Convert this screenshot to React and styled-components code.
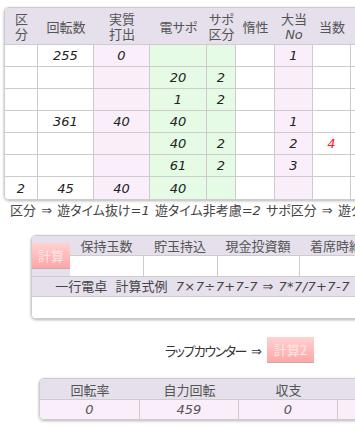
import React from "react";
import styled, { createGlobalStyle } from "styled-components";

const Global = createGlobalStyle`
  html, body { margin: 0; padding: 0; background: #fff; overflow: hidden; }
  body {
    font-family: "DejaVu Sans", "Noto Sans CJK JP", sans-serif;
    font-size: 13px;
    color: #333;
    font-feature-settings: "palt";
  }
`;

const Page = styled.div`
  width: 355px;
  height: 428px;
  overflow: hidden;
  padding-top: 7px;
  box-sizing: border-box;
`;

const C = {
  head: "#e5e0eb",
  pink: "#f9eefa",
  green: "#e5fbe5",
  line: "#cccccc",
};

const MainGrid = styled.div`
  display: grid;
  grid-template-columns: 33px 56px 56px 57px 29px 39px 38px 38px 40px;
  grid-template-rows: 37px repeat(7, 22px);
  width: max-content;
  margin-left: 4px;
  border: 1px solid ${C.line};
  border-radius: 5px;
  overflow: hidden;
  box-shadow: 0 1px 3px rgba(0, 0, 0, 0.3);
`;

const HeadCell = styled.div`
  box-sizing: border-box;
  background: ${C.head};
  border-bottom: 1px solid ${C.line};
  display: flex;
  align-items: center;
  justify-content: center;
  text-align: center;
  line-height: 15px;
  color: #555;
  font-family: "Noto Sans CJK JP", sans-serif;
  white-space: nowrap;
`;

const Ital = styled.span`
  font-family: "DejaVu Sans", sans-serif;
  font-style: italic;
`;

const DataCell = styled.div`
  box-sizing: border-box;
  background: ${(p) => p.$bg};
  border-right: 1px solid ${C.line};
  border-bottom: ${(p) => (p.$last ? "none" : `1px solid ${C.line}`)};
  display: flex;
  align-items: center;
  justify-content: center;
  font-style: italic;
  color: ${(p) => (p.$red ? "#ff2020" : "#222")};
`;

const Note = styled.div`
  margin: 3px 0 0 10px;
  line-height: 15px;
  white-space: nowrap;
  color: #444;
  word-spacing: 1px;
  i { font-family: "DejaVu Sans", sans-serif; }
`;

const Calc = styled.div`
  display: grid;
  grid-template-columns: 38px 73px 74px 82px 74px;
  grid-template-rows: 20px 21px 20px 21px;
  width: max-content;
  margin: 17px 0 0 31px;
  border: 1px solid ${C.line};
  border-radius: 5px;
  overflow: hidden;
  box-shadow: 0 1px 3px rgba(0, 0, 0, 0.3);
`;

const BtnCell = styled.div`
  grid-row: span 2;
  background: ${C.head};
  border-bottom: 1px solid ${C.line};
  display: flex;
  align-items: center;
  justify-content: center;
`;

const PinkButton = styled.button`
  width: ${(p) => p.$w}px;
  height: 26px;
  padding: 0;
  border: none;
  border-bottom: 1px solid #b9b0b0;
  background: linear-gradient(#ffd2d2, #ffa6a6);
  color: #ffe6e6;
  font-family: "Noto Sans CJK JP", sans-serif;
  font-size: 13px;
  cursor: pointer;
`;

const InputCell = styled.div`
  box-sizing: border-box;
  background: #fff;
  border-left: ${(p) => (p.$first ? "none" : `1px solid ${C.line}`)};
  border-bottom: 1px solid ${C.line};
`;

const WideHead = styled(HeadCell)`
  grid-column: 1 / -1;
  color: #444;
  font-family: "DejaVu Sans", "Noto Sans CJK JP", sans-serif;
`;

const Formula = styled.i`
  font-family: "DejaVu Sans", sans-serif;
  letter-spacing: 0.4px;
`;

const WideBlank = styled.div`
  grid-column: 1 / -1;
  background: #fff;
`;

const LapRow = styled.div`
  display: flex;
  align-items: center;
  gap: 5px;
  margin: 18px 0 0 165px;
  white-space: nowrap;
  color: #333;
`;

const LapLabel = styled.span`
  letter-spacing: -1.5px;
`;

const Arrow = styled.span`
  margin-left: 5px;
  letter-spacing: 0;
`;

const Result = styled.div`
  display: grid;
  grid-template-columns: 100px 99px 99px 100px;
  grid-template-rows: 21px 19px;
  width: max-content;
  margin: 15px 0 0 39px;
  border: 1px solid ${C.line};
  border-radius: 5px;
  overflow: hidden;
  box-shadow: 0 1px 3px rgba(0, 0, 0, 0.3);
`;

const ResultVal = styled.div`
  box-sizing: border-box;
  background: ${C.pink};
  border-right: 1px solid ${C.line};
  display: flex;
  align-items: center;
  justify-content: center;
  font-style: italic;
  color: #555;
`;

const headers = [
  ["区", "分"],
  ["回転数"],
  ["実質", "打出"],
  ["電サポ"],
  ["サポ", "区分"],
  ["惰性"],
  ["大当", <Ital key="no">No</Ital>],
  ["当数"],
  [""],
];

const colBg = ["#fff", "#fff", C.pink, C.green, C.green, "#fff", C.pink, "#fff", "#fff"];

const rows = [
  ["", "255", "0", "", "", "", "1", "", ""],
  ["", "", "", "20", "2", "", "", "", ""],
  ["", "", "", "1", "2", "", "", "", ""],
  ["", "361", "40", "40", "", "", "1", "", ""],
  ["", "", "", "40", "2", "", "2", "4", ""],
  ["", "", "", "61", "2", "", "3", "", ""],
  ["2", "45", "40", "40", "", "", "", "", ""],
];

export default function App() {
  return (
    <Page>
      <Global />
      <MainGrid>
        {headers.map((h, i) => (
          <HeadCell key={"h" + i}>
            <div>
              {h.map((l, j) => (
                <div key={j}>{l}</div>
              ))}
            </div>
          </HeadCell>
        ))}
        {rows.map((r, ri) =>
          r.map((v, ci) => (
            <DataCell
              key={ri + "-" + ci}
              $bg={colBg[ci]}
              $last={ri === rows.length - 1}
              $red={ci === 7}
            >
              {v}
            </DataCell>
          ))
        )}
      </MainGrid>
      <Note>
        区分 ⇒ 遊タイム抜け=<i>1</i> 遊タイム非考慮=<i>2</i> サポ区分 ⇒ 遊タイム中=<i>1</i>
      </Note>
      <Calc>
        <BtnCell>
          <PinkButton $w={38}>計算</PinkButton>
        </BtnCell>
        <HeadCell>保持玉数</HeadCell>
        <HeadCell>貯玉持込</HeadCell>
        <HeadCell>現金投資額</HeadCell>
        <HeadCell>着席時給</HeadCell>
        <InputCell $first />
        <InputCell />
        <InputCell />
        <InputCell />
        <WideHead>
          一行電卓&nbsp;&nbsp;計算式例&nbsp;&nbsp;<Formula>7×7÷7+7-7 ⇒ 7*7/7+7-7</Formula>
        </WideHead>
        <WideBlank />
      </Calc>
      <LapRow>
        <LapLabel>
          ラップカウンター<Arrow>⇒</Arrow>
        </LapLabel>
        <PinkButton $w={47}>計算2</PinkButton>
      </LapRow>
      <Result>
        <HeadCell>回転率</HeadCell>
        <HeadCell>自力回転</HeadCell>
        <HeadCell>収支</HeadCell>
        <HeadCell>投資</HeadCell>
        <ResultVal>0</ResultVal>
        <ResultVal>459</ResultVal>
        <ResultVal>0</ResultVal>
        <ResultVal></ResultVal>
      </Result>
    </Page>
  );
}
